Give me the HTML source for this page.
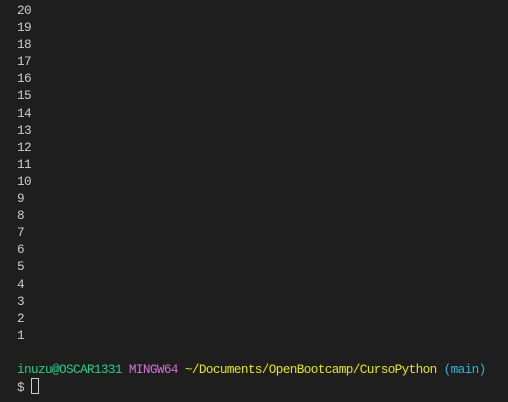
<!DOCTYPE html>
<html><head><style>
html,body{margin:0;padding:0;background:#1e1e1e;width:508px;height:402px;overflow:hidden}
pre{position:absolute;left:17px;top:2px;margin:0;font-family:"Liberation Mono",monospace;font-size:12.7px;letter-spacing:-0.62px;line-height:17.1px;color:#cccccc}
.g{color:#23d18b}.p{color:#d670d6}.y{color:#e5e510}.c{color:#29b8db}
.cur{display:inline-block;width:6px;height:14px;border:1px solid #cccccc;vertical-align:-3px}
</style></head><body>
<pre>20
19
18
17
16
15
14
13
12
11
10
9
8
7
6
5
4
3
2
1

<span class="g">inuzu@OSCAR1331</span> <span class="p">MINGW64</span> <span class="y">~/Documents/OpenBootcamp/CursoPython</span> <span class="c">(main)</span>
$ <span class="cur"></span></pre>
</body></html>
